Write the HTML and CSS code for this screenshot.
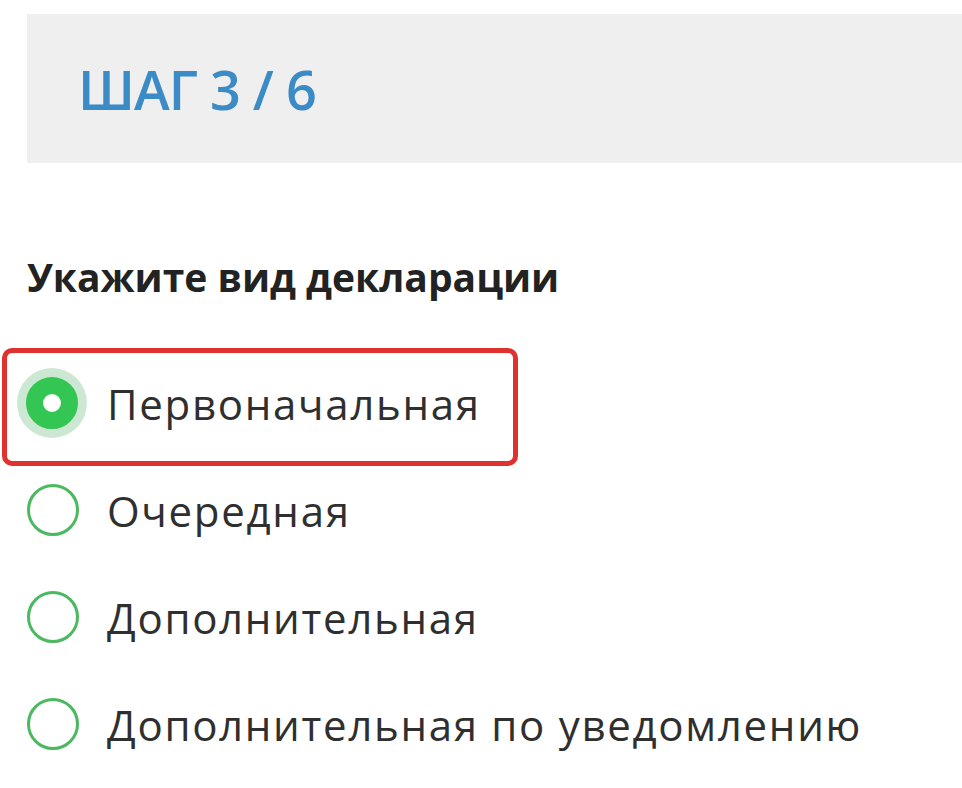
FILE: index.html
```html
<!DOCTYPE html>
<html lang="ru">
<head>
  <meta charset="UTF-8">
  <meta name="viewport" content="width=device-width, initial-scale=1.0">
  <title>Шаг 3 / 6</title>
  <link rel="stylesheet" href="styles.css">
</head>
<body>
  <div class="step-bar">
    <h1 class="step-title">ШАГ 3 / 6</h1>
  </div>

  <form class="decl-form">
    <p class="question">Укажите вид декларации</p>

    <label class="option option-selected">
      <input type="radio" name="vid" value="1" checked>
      <span class="radio"></span>
      <span class="option-text">Первоначальная</span>
    </label>

    <label class="option">
      <input type="radio" name="vid" value="2">
      <span class="radio"></span>
      <span class="option-text">Очередная</span>
    </label>

    <label class="option">
      <input type="radio" name="vid" value="3">
      <span class="radio"></span>
      <span class="option-text">Дополнительная</span>
    </label>

    <label class="option">
      <input type="radio" name="vid" value="4">
      <span class="radio"></span>
      <span class="option-text">Дополнительная по уведомлению</span>
    </label>
  </form>
</body>
</html>
```

FILE: styles.css
```css
body {
  margin: 0;
  padding: 14px 0 0 0;
  font-family: "Open Sans", Arial, sans-serif;
  background: #fff;
  color: #333;
  overflow: hidden;
}
.step-bar {
  margin-left: 27px;
  height: 149px;
  background: #efefef;
  display: flex;
  align-items: center;
  padding-left: 51px;
}
.step-title {
  margin: 0;
  font-size: 54px;
  line-height: 1;
  font-weight: 600;
  color: #3a8bc6;
  letter-spacing: -1px;
}
.decl-form {
  display: flex;
  flex-direction: column;
  align-items: flex-start;
  padding-top: 94px;
}
.question {
  margin: 0 0 52px 27px;
  font-size: 39px;
  line-height: 1;
  font-weight: 700;
  color: #222;
}
.option {
  display: flex;
  align-items: center;
  gap: 28px;
  height: 64px;
  margin-top: 43px;
  padding-left: 27px;
  font-size: 42px;
  letter-spacing: 1.7px;
  color: #2f2f2f;
  cursor: pointer;
}
.option input {
  display: none;
}
.radio {
  width: 52px;
  height: 52px;
  border: 3px solid #4cb860;
  border-radius: 50%;
  flex: none;
  box-sizing: border-box;
}
.option-selected {
  box-sizing: border-box;
  width: 516px;
  height: 118px;
  margin: 0 0 0 2px;
  padding: 0 0 8px 19px;
  border: 5px solid #e03131;
  border-radius: 10px;
  gap: 29px;
}
.option-selected + .option {
  margin-top: 12px;
}
.option-selected .radio {
  border: 17px solid #33c653;
  background: #fff;
  box-shadow: 0 0 0 9px #cde8d2;
}
```
